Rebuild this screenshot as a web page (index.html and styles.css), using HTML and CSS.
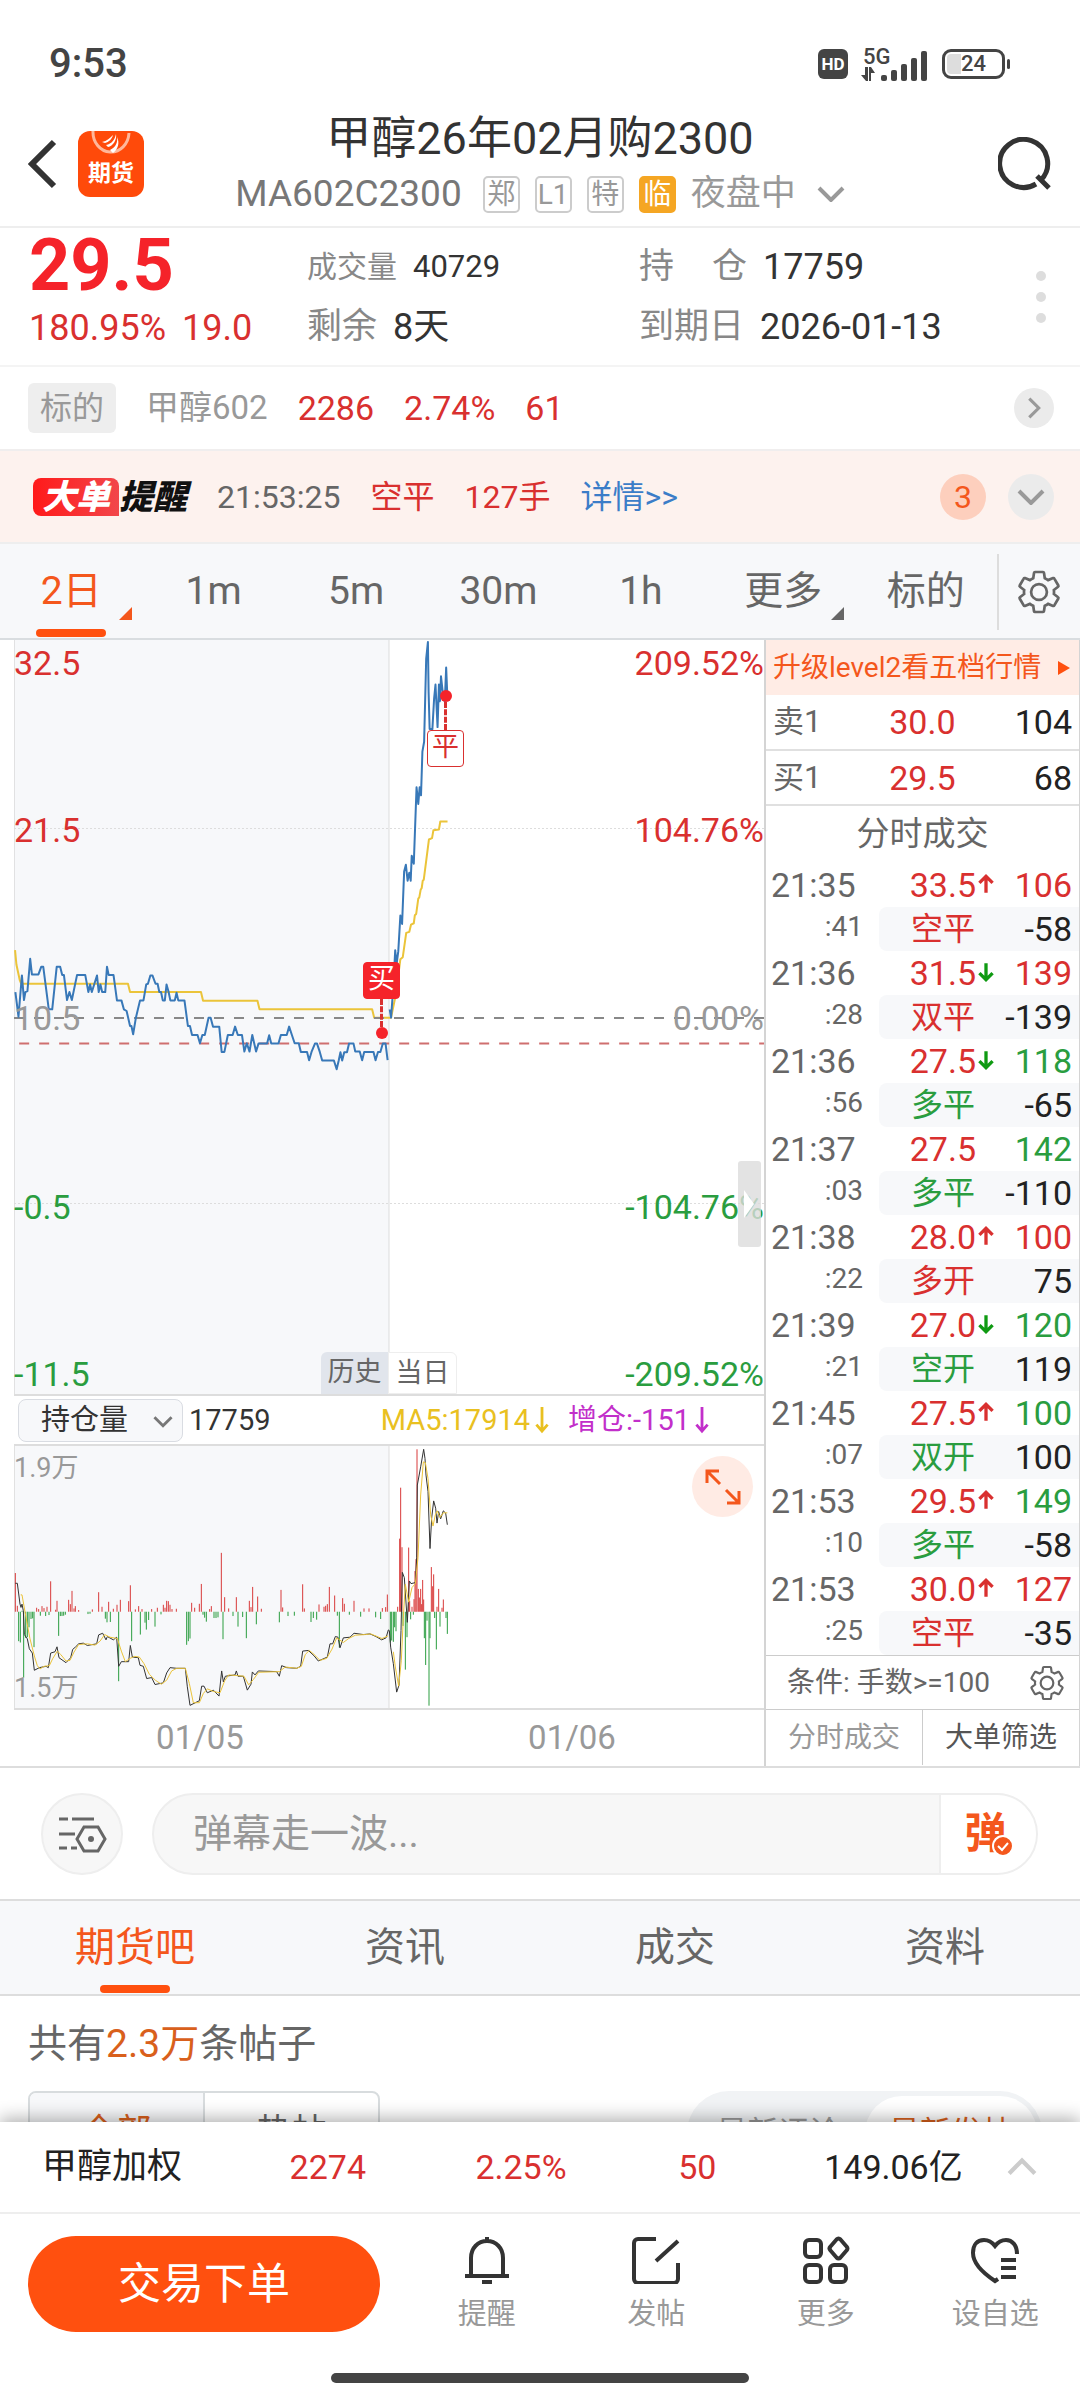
FILE: index.html
```html
<!DOCTYPE html>
<html lang="zh-CN">
<head>
    <meta charset="UTF-8">
    <meta name="viewport" content="width=device-width, initial-scale=1.0">
    <title>甲醇26年02月购2300</title>
    <link rel="stylesheet" href="styles.css">
</head>
<body>
    <!-- 公用图标 -->
    <svg class="sprite" aria-hidden="true">
        <symbol id="up" viewBox="0 0 16 20"><path d="M8 18V3M2 9l6-6 6 6" fill="none" stroke="currentColor" stroke-width="3"/></symbol>
        <symbol id="down" viewBox="0 0 16 20"><path d="M8 2v15M2 11l6 6 6-6" fill="none" stroke="currentColor" stroke-width="3"/></symbol>
        <symbol id="long-down" viewBox="0 0 16 30"><path d="M8 1v26M2 20l6 7 6-7" fill="none" stroke="currentColor" stroke-width="3"/></symbol>
        <symbol id="chevron" viewBox="0 0 28 16"><path d="M2 2l12 12L26 2" fill="none" stroke="currentColor" stroke-width="4"/></symbol>
        <symbol id="gear" viewBox="0 0 24 24"><g fill="none" stroke="currentColor"><path d="M19.14 12.94c.04-.3.06-.61.06-.94 0-.32-.02-.64-.07-.94l2.03-1.58c.18-.14.23-.41.12-.61l-1.92-3.32c-.12-.22-.37-.29-.59-.22l-2.39.96c-.5-.38-1.03-.7-1.62-.94L14.4 2.81c-.04-.24-.24-.41-.48-.41h-3.84c-.24 0-.43.17-.47.41L9.25 5.35c-.59.24-1.13.57-1.62.94l-2.39-.96c-.22-.08-.47 0-.59.22L2.74 8.87c-.12.21-.08.47.12.61l2.03 1.58c-.05.3-.09.63-.09.94s.02.64.07.94l-2.03 1.58c-.18.14-.23.41-.12.61l1.92 3.32c.12.22.37.29.59.22l2.39-.96c.5.38 1.03.7 1.62.94l.36 2.54c.05.24.24.41.48.41h3.84c.24 0 .44-.17.47-.41l.36-2.54c.59-.24 1.13-.56 1.62-.94l2.39.96c.22.08.47 0 .59-.22l1.92-3.32c.12-.22.07-.47-.12-.61z" stroke-width="1.3"/><circle cx="12" cy="12" r="3.8" stroke-width="1.3"/></g></symbol>
    </svg>

    <div class="app">
        <div class="status">
            <span class="clock">9:53</span>
            <div class="status-icons">
                <span class="hd">HD</span>
                <svg width="68" height="36" viewBox="0 0 68 36" fill="#444">
                    <text x="2" y="18" class="net">5G</text>
                    <path d="M4 21v8H0l5 6h2V21zM10 35v-8h4l-4-6H8v14z"/>
                    <rect x="20" y="29" width="6" height="6" rx="2"/>
                    <rect x="30" y="24" width="6" height="11" rx="2"/>
                    <rect x="40" y="18" width="6" height="17" rx="2"/>
                    <rect x="50" y="12" width="6" height="23" rx="2"/>
                    <rect x="60" y="5" width="6" height="30" rx="2"/>
                </svg>
                <span class="battery">24</span>
            </div>
        </div>

        <header class="header">
            <div class="header-left">
                <button class="icon-btn" aria-label="返回"><svg width="30" height="50" viewBox="0 0 30 50"><path d="M26 3L4 25l22 22" fill="none" stroke="#333" stroke-width="6"/></svg></button>
                <a href="#" class="logo">
                    <svg width="40" height="26" viewBox="0 0 40 26"><path d="M2 0a18 20 0 0 0 36 2" fill="none" stroke="#ffb79a" stroke-width="3"/><path d="M11 11c5-1 8-4 11-7-1 4-4 7-8 8zM15 14c6-1 9-6 10-11 1 6-3 12-8 13zM19 19c6-3 8-8 7-13 3 6 1 12-4 16z" fill="#fff"/></svg>
                    期货
                </a>
            </div>
            <div class="header-mid">
                <h1>甲醇26年02月购2300</h1>
                <div class="sub">
                    <span class="code">MA602C2300</span>
                    <span class="tag">郑</span>
                    <span class="tag">L1</span>
                    <span class="tag">特</span>
                    <span class="tag tag-on">临</span>
                    <span class="session">夜盘中</span>
                    <svg class="chev" width="28" height="16"><use href="#chevron"/></svg>
                </div>
            </div>
            <div class="header-right">
                <button class="icon-btn" aria-label="搜索"><svg width="54" height="54" viewBox="0 0 54 54"><path d="M38 47A24 24 0 1 1 43 43M39 39l12 12" fill="none" stroke="#333" stroke-width="5"/></svg></button>
            </div>
        </header>

        <main class="main">
            <section class="quote">
                <div class="quote-price">
                    <strong>29.5</strong>
                    <p><span>180.95%</span><span>19.0</span></p>
                </div>
                <dl class="quote-col">
                    <div class="small"><dt>成交量</dt><dd>40729</dd></div>
                    <div><dt>剩余</dt><dd>8天</dd></div>
                </dl>
                <dl class="quote-col">
                    <div><dt class="spread"><i>持</i><i>仓</i></dt><dd>17759</dd></div>
                    <div><dt>到期日</dt><dd>2026-01-13</dd></div>
                </dl>
                <button class="dots" aria-label="更多行情"><i></i><i></i><i></i></button>
            </section>

            <section class="under">
                <span class="under-tag">标的</span>
                <span class="under-name">甲醇602</span>
                <span class="red">2286</span>
                <span class="red">2.74%</span>
                <span class="red">61</span>
                <button class="round round-s" aria-label="查看标的"><svg class="turn" width="22" height="14"><use href="#chevron"/></svg></button>
            </section>

            <section class="alert">
                <span class="alert-logo"><b>大单</b><em>提醒</em></span>
                <span>21:53:25</span>
                <span class="red">空平</span>
                <span class="red">127手</span>
                <a href="#">详情&gt;&gt;</a>
                <span class="count">3</span>
                <button class="round" aria-label="展开"><svg width="28" height="16"><use href="#chevron"/></svg></button>
            </section>

            <nav class="periods">
                <button class="period active more">2日</button>
                <button class="period">1m</button>
                <button class="period">5m</button>
                <button class="period">30m</button>
                <button class="period">1h</button>
                <button class="period more">更多</button>
                <button class="period">标的</button>
                <button class="setting" aria-label="设置"><svg width="50" height="50"><use href="#gear"/></svg></button>
            </nav>

            <section class="market">
                <div class="charts">
                    <!-- 分时走势 -->
                    <div class="price-chart">
                        <svg class="plot" viewBox="41 24 2178 2268" preserveAspectRatio="none">
                            <rect x="41" y="24" width="1089" height="2268" fill="#f7f8fa"/>
                            <g class="grid">
                                <path d="M41 591H2219M41 1719H2219" stroke-dasharray="2 2"/>
                                <path d="M42 24V2292M1130 24V2292"/>
                            </g>
                            <path class="line avg" d="M44 957L48 1000 58 1048 62 1058H372L378 1083H584L590 1109H748L754 1135H1081L1087 1160H1136L1150 1090 1163 984 1170 978 1180 905 1189 902 1194 880 1202 876 1205 852 1209 848 1215 802 1218 798 1222 775 1225 770 1228 748 1231 745 1246 624 1255 620 1259 596 1275 594 1279 570H1300"/>
                            <path class="zero" d="M41 1161H2219"/>
                            <path class="last" d="M56 1238H2219"/>
                            <path class="line now" d="M45 1083L54 1157 64 1033 70 1107 74 1083 80 1080 88 983 93 1030H112L120 1007H126L142 1135H152L165 1007H175L181 1032H186L195 1107 202 1083 209 1107 224 1032H248L257 1083 262 1060 267 1083 282 1033 287 1083 292 1060 297 1083H306L311 1007 316 1032H330L340 1108H353L360 1135 368 1140 378 1185H382L387 1210 395 1160 407 1108H417L425 1060 430 1058 437 1033H443L452 1058H458L463 1083H468L473 1108H479L484 1060 490 1083 495 1108H508L513 1085 518 1108H536L546 1185H552L558 1212H574L581 1237 588 1212H595L606 1160H612L619 1187H637L644 1263H652L662 1212H676L683 1187 691 1212H703L710 1262 717 1237 725 1262 733 1212 744 1262 751 1238H776L782 1213 788 1238H809L816 1212H833L840 1187 848 1212 856 1237H868L874 1263H892L898 1288 905 1263 915 1238H921L929 1263 936 1289H970L978 1315 984 1289 989 1264 994 1289 1000 1264H1008L1014 1238H1027L1032 1262H1045L1052 1288 1058 1263H1085L1091 1288 1098 1263H1105L1112 1238H1120L1126 1288M1132 1135L1136 1160 1143 1060 1148 957 1152 1000 1157 960 1163 853 1168 878 1174 720 1179 700 1184 748 1189 724 1193 748 1196 673 1202 697 1210 467 1215 517 1219 467 1223 491 1227 360 1232 330 1238 80 1243 30 1245 180 1248 292H1256L1261 200 1265 158 1271 286 1275 158 1278 208 1281 133 1287 190 1292 210 1296 107 1300 208"/>
                        </svg>
                        <ul class="axis">
                            <li class="red">32.5</li>
                            <li class="red">21.5</li>
                            <li>10.5</li>
                            <li class="green">-0.5</li>
                            <li class="green">-11.5</li>
                        </ul>
                        <ul class="axis axis-right">
                            <li class="red">209.52%</li>
                            <li class="red">104.76%</li>
                            <li>0.00%</li>
                            <li class="green">-104.76%</li>
                            <li class="green">-209.52%</li>
                        </ul>
                        <div class="mark buy"><b>买</b></div>
                        <div class="mark flat"><b>平</b></div>
                        <div class="days"><span>历史</span><span>当日</span></div>
                        <div class="handle"></div>
                    </div>

                    <div class="indicator">
                        <label class="pick">
                            <select aria-label="副图指标"><option>持仓量</option></select>
                            <svg width="20" height="13"><use href="#chevron"/></svg>
                        </label>
                        <span>17759</span>
                        <span class="ma">MA5:17914<svg width="16" height="28"><use href="#long-down"/></svg></span>
                        <span class="inc">增仓:-151<svg width="16" height="28"><use href="#long-down"/></svg></span>
                    </div>

                    <!-- 持仓量副图 -->
                    <div class="hold-chart">
                        <svg class="plot" viewBox="42 42 2250 792" preserveAspectRatio="none">
                            <rect x="42" y="42" width="1125" height="792" fill="#f7f8fa"/>
                            <path class="grid" d="M43 42V834M1167 42V834"/>
                            <path class="bar rise" d="M46 543V426M52 543V525M110 543V531M116 543V535M126 543V526M132 543V532M141 543V528M152 543V451M167 543V537M171 543V510M206 543V507M211 543V520M216 543V480M222 543V533M226 543V526M236 543V538M277 543V536M296 543V484M306 543V528M326 543V513M340 543V534M351 543V522M361 543V507M386 543V511M391 543V463M406 543V536M416 543V526M426 543V535M455 543V535M472 543V531M490 543V522M495 543V531M500 543V510M505 543V511M510 543V522M516 543V535M529 543V534M575 543V516M584 543V531M598 543V519M604 543V459M629 543V535M634 543V526M664 543V365M674 543V499M686 543V533M709 543V499M748 543V510M753 543V529M758 543V468M773 543V497M784 543V534M843 543V477M848 543V530M908 543V460M913 543V533M957 543V521M972 543V528M977 543V525M982 543V520M988 543V468M1004 543V494M1028 543V502M1033 543V519M1062 543V510M1092 543V533M1107 543V533M1147 543V532M1157 543V529M1162 543V491M1193 543V528M1199 543V322M1202 543V168M1206 543V348M1226 543V349M1229 543V510M1236 543V528M1242 543V505M1245 543V420M1248 543V384M1251 543V52M1255 543V474M1258 543V500M1262 543V474M1265 543V520M1268 543V447M1271 543V506M1294 543V408M1298 543V466M1301 543V430M1311 543V528M1316 543V474M1326 543V531M1330 543V506"/>
                            <path class="bar fall" d="M56 543V632M61 543V636M66 543V540M71 543V742M77 543V622M82 543V620M87 543V590M93 543V565M98 543V563M102 543V650M121 543V555M137 543V556M147 543V553M176 543V616M181 543V556M186 543V556M191 543V555M196 543V552M264 543V550M270 543V549M316 543V564M321 543V575M331 543V574M356 543V753M395 543V632M421 543V612M435 543V576M439 543V597M446 543V568M465 543V588M483 543V551M560 543V643M565 543V632M570 543V624M609 543V552M614 543V561M619 543V573M642 543V562M648 543V562M654 543V560M669 543V626M699 543V556M714 543V588M728 543V559M739 543V623M769 543V581M838 543V575M864 543V556M883 543V555M933 543V574M940 543V562M950 543V567M1012 543V555M1018 543V651M1048 543V552M1082 543V558M1127 543V560M1142 543V565M1171 543V636M1175 543V630M1180 543V634M1184 543V590M1188 543V602M1209 543V586M1216 543V718M1221 543V620M1232 543V566M1240 543V552M1273 543V623M1277 543V704M1281 543V570M1287 543V827M1290 543V623M1304 543V562M1309 543V657M1320 543V588M1338 543V562M1342 543V610"/>
                            <path class="line hold" d="M46 457H52L60 520 63 530 66 520 70 540 73 612 82 625 88 655 97 668 103 720 118 712 138 708 145 712 152 668 165 664 171 649 177 682 198 697 212 682 218 657 226 650 236 640 250 638 262 645 290 640 296 613 308 608 318 628 322 618 340 628 350 620 356 708 364 694H386L391 645 397 680 415 682 420 705 430 708 440 745 455 742 465 763 490 758 500 728 510 712 530 714H556L562 770 570 826 582 820 598 812 605 768H612L622 788 640 780 657 798 665 722 670 755 676 738 705 734 709 722 714 738H730L742 780 753 762 757 725 765 734 775 722 830 724 838 738 845 706 860 712 890 714 902 708 908 662 925 660 942 676 955 692 982 680 990 640H998L1006 618 1014 620 1020 652 1030 622 1050 620 1062 608 1090 612 1110 610 1128 618 1145 628 1158 622 1165 598 1168 600 1172 650 1180 700 1190 786 1197 765 1203 600 1207 424 1213 440 1222 575 1228 450 1233 458 1246 455 1250 380 1252 160 1262 105 1271 52 1275 80 1278 130 1284 180 1290 352 1295 260 1301 208 1307 230 1311 275 1316 240 1322 262 1330 238 1337 245 1342 280"/>
                            <path class="line avg" d="M62 492H66L78 560 90 625 104 680 112 706 120 716 132 708 148 706 158 685 172 662 182 672 198 692 210 690 222 665 236 642 262 640 285 644 300 632 314 612 330 620 352 624 364 662 376 694 390 684 404 678 418 680 432 700 448 732 466 750 484 762 500 750 515 722 530 714H556L568 760 580 818 598 818 610 790 622 776 640 784 660 788 674 752 686 734 712 736 732 738 746 764 760 748 776 726 838 724 856 710 890 714 904 708 916 672 928 660 942 672 960 690 980 684 996 656 1010 622 1030 636 1046 624 1066 614 1096 612 1112 610 1146 624 1164 616M1180 664L1186 710 1196 768 1204 690 1210 560 1216 460 1226 514 1236 470 1246 458 1254 380 1262 190 1270 90 1276 92 1284 140 1292 250 1299 284 1306 250 1312 238 1320 258 1330 244 1342 244"/>
                        </svg>
                        <span class="hold-max">1.9万</span>
                        <span class="hold-min">1.5万</span>
                        <button class="expand" aria-label="放大"><svg width="36" height="36" viewBox="0 0 36 36" fill="none" stroke="#f4571c" stroke-width="3"><path d="M15 15L2 2M2 14V2h12M21 21l13 13M34 22v12H22"/></svg></button>
                    </div>
                    <div class="dates"><span>01/05</span><span>01/06</span></div>
                </div>

                <aside class="panel">
                    <a href="#" class="upgrade">升级level2看五档行情<i></i></a>
                    <table class="book">
                        <tr><th>卖1</th><td class="red">30.0</td><td>104</td></tr>
                        <tr><th>买1</th><td class="red">29.5</td><td>68</td></tr>
                    </table>
                    <h2>分时成交</h2>
                    <table class="trades">
                        <tr><td>21:35</td><td class="red">33.5<svg><use href="#up"/></svg></td><td class="red">106</td></tr>
                        <tr class="detail"><td>:41</td><td class="red">空平</td><td>-58</td></tr>
                        <tr><td>21:36</td><td class="red">31.5<svg class="dn"><use href="#down"/></svg></td><td class="red">139</td></tr>
                        <tr class="detail"><td>:28</td><td class="red">双平</td><td>-139</td></tr>
                        <tr><td>21:36</td><td class="red">27.5<svg class="dn"><use href="#down"/></svg></td><td class="green">118</td></tr>
                        <tr class="detail"><td>:56</td><td class="green">多平</td><td>-65</td></tr>
                        <tr><td>21:37</td><td class="red">27.5<svg></svg></td><td class="green">142</td></tr>
                        <tr class="detail"><td>:03</td><td class="green">多平</td><td>-110</td></tr>
                        <tr><td>21:38</td><td class="red">28.0<svg><use href="#up"/></svg></td><td class="red">100</td></tr>
                        <tr class="detail"><td>:22</td><td class="red">多开</td><td>75</td></tr>
                        <tr><td>21:39</td><td class="red">27.0<svg class="dn"><use href="#down"/></svg></td><td class="green">120</td></tr>
                        <tr class="detail"><td>:21</td><td class="green">空开</td><td>119</td></tr>
                        <tr><td>21:45</td><td class="red">27.5<svg><use href="#up"/></svg></td><td class="green">100</td></tr>
                        <tr class="detail"><td>:07</td><td class="green">双开</td><td>100</td></tr>
                        <tr><td>21:53</td><td class="red">29.5<svg><use href="#up"/></svg></td><td class="green">149</td></tr>
                        <tr class="detail"><td>:10</td><td class="green">多平</td><td>-58</td></tr>
                        <tr><td>21:53</td><td class="red">30.0<svg><use href="#up"/></svg></td><td class="red">127</td></tr>
                        <tr class="detail"><td>:25</td><td class="red">空平</td><td>-35</td></tr>
                    </table>
                    <button class="filter">条件: 手数&gt;=100<svg width="40" height="40"><use href="#gear"/></svg></button>
                    <div class="panel-tabs">
                        <button>分时成交</button>
                        <button class="active">大单筛选</button>
                    </div>
                </aside>
            </section>

            <form class="danmu">
                <button type="button" class="danmu-set" aria-label="弹幕设置">
                    <svg width="50" height="40" viewBox="0 0 50 40" fill="none" stroke="#666" stroke-width="3"><path d="M2 5h9M15 5h22M2 20h16M2 34h8M14 34h6M27 13h14l7 12-7 12H27l-7-12z"/><circle cx="34" cy="25" r="3" fill="#666" stroke="none"/></svg>
                </button>
                <div class="danmu-box">
                    <input type="text" placeholder="弹幕走一波..." aria-label="弹幕">
                    <button type="button" class="danmu-on">弹<svg width="22" height="22" viewBox="0 0 22 22"><circle cx="11" cy="11" r="10" fill="#f4571c" stroke="#fff" stroke-width="2"/><path d="M6 11l4 4 6-7" fill="none" stroke="#fff" stroke-width="2"/></svg></button>
                </div>
            </form>

            <nav class="tabs">
                <button class="active">期货吧</button>
                <button>资讯</button>
                <button>成交</button>
                <button>资料</button>
            </nav>

            <section class="posts">
                <p>共有<span>2.3万</span>条帖子</p>
                <div class="posts-bar">
                    <div class="seg">
                        <button class="active">全部</button>
                        <button>热帖</button>
                    </div>
                    <div class="sort">
                        <button>最新评论</button>
                        <button class="active">最新发帖</button>
                    </div>
                </div>
            </section>
        </main>

        <footer class="footer">
            <div class="ticker">
                <span>甲醇加权</span>
                <span class="red">2274</span>
                <span class="red">2.25%</span>
                <span class="red">50</span>
                <span>149.06亿</span>
                <button class="icon-btn" aria-label="展开"><svg class="flip" width="30" height="20"><use href="#chevron"/></svg></button>
            </div>
            <div class="actions">
                <button class="trade">交易下单</button>
                <nav class="foot-nav">
                    <a href="#"><svg viewBox="0 0 48 48"><path d="M24 1v5M8 39V22C8 12 15 5 24 5s16 7 16 17v17M2 40h44M19 46h10"/></svg>提醒</a>
                    <a href="#"><svg viewBox="0 0 48 48"><path d="M24 3H6a4 4 0 0 0-4 4v36a4 4 0 0 0 4 4h36a4 4 0 0 0 4-4V27M24 25L46 5"/></svg>发帖</a>
                    <a href="#"><svg viewBox="0 0 48 48"><rect x="3" y="4" width="16" height="17" rx="4"/><rect x="3" y="29" width="16" height="17" rx="4"/><rect x="28" y="29" width="16" height="17" rx="4"/><path d="M34.500 3.500q2-2 4 0l6 7q2 2 0 4l-6 7q-2 2-4 0l-6-7q-2-2 0-4z"/></svg>更多</a>
                    <a href="#"><svg viewBox="0 0 48 48"><path d="M46 18C46 9 41 4 35 4c-5 0-8 2-11 6C21 6 18 4 13 4 6 4 2 9 2 17c0 11 10 20 22 28l3-2M30 24h15M30 32h15M30 41h15"/></svg>设自选</a>
                </nav>
            </div>
            <div class="home-bar"></div>
        </footer>
    </div>
</body>
</html>
```
FILE: styles.css
```css
* {
    margin: 0;
    padding: 0;
    box-sizing: border-box;
}
body {
    font-family: Roboto, "Noto Sans CJK SC", sans-serif;
    font-size: 34px;
    line-height: 40px;
    color: #666;
    background-color: #fff;
}
button, input, select {
    font: inherit;
    color: inherit;
    background: none;
    border: none;
}
a {
    color: inherit;
    text-decoration: none;
}
ul {
    list-style: none;
}
i, em {
    font-style: normal;
}
svg {
    display: block;
    flex: none;
}
.sprite {
    position: absolute;
    width: 0;
    height: 0;
}
.red {
    color: #d9302f;
}
.green {
    color: #2a9d3f;
}
.icon-btn {
    display: flex;
}
.flip {
    transform: rotate(180deg);
}
.turn {
    transform: rotate(-90deg);
}

/* 整页：顶部 + 滚动内容 + 底部 */
.app {
    height: 100vh;
    display: flex;
    flex-direction: column;
}
.main {
    flex: 1;
    min-height: 0;
    overflow-y: auto;
    scrollbar-width: none;
}

/* 状态栏 */
.status {
    flex: none;
    display: flex;
    justify-content: space-between;
    align-items: center;
    height: 106px;
    padding: 22px 75px 0 49px;
    color: #444;
}
.clock {
    font-size: 40px;
    font-weight: 500;
}
.status-icons {
    display: flex;
    align-items: center;
    gap: 13px;
}
.hd {
    width: 30px;
    height: 30px;
    line-height: 30px;
    border-radius: 6px;
    background-color: #444;
    color: #fff;
    font-size: 17px;
    font-weight: 700;
    text-align: center;
}
.net {
    font-size: 22px;
    font-weight: 500;
}
.status-icons svg {
    overflow: visible;
}
.battery {
    position: relative;
    width: 63px;
    height: 30px;
    padding: 2px;
    line-height: 20px;
    border: 3px solid #444;
    border-radius: 9px;
    background: linear-gradient(90deg, #ddd 14px, #fff 14px) content-box;
    font-size: 22px;
    font-weight: 500;
    text-align: center;
}
.battery::after {
    content: "";
    position: absolute;
    right: -8px;
    top: 7px;
    width: 3px;
    height: 10px;
    border-radius: 2px;
    background-color: #444;
}

/* 标题栏 */
.header {
    flex: none;
    display: grid;
    grid-template-columns: 160px 1fr 160px;
    align-items: center;
    height: 122px;
    padding-bottom: 4px;
    border-bottom: 2px solid #eee;
}
.header-left {
    display: flex;
    align-items: center;
    gap: 20px;
    padding-left: 28px;
}
.logo {
    display: flex;
    flex-direction: column;
    align-items: center;
    width: 66px;
    height: 66px;
    border-radius: 12px;
    background-color: #ff4a0a;
    color: #fff;
    font-size: 23px;
    font-weight: 700;
    line-height: 34px;
}
.header-mid {
    text-align: center;
}
.header-mid h1 {
    font-size: 45px;
    font-weight: 400;
    line-height: 60px;
    color: #333;
}
.sub {
    display: flex;
    justify-content: center;
    align-items: center;
    gap: 15px;
    height: 50px;
    color: #888;
}
.code {
    font-size: 37px;
    color: #777;
    margin-right: 6px;
}
.tag {
    width: 37px;
    height: 37px;
    line-height: 33px;
    border: 2px solid #ccc;
    border-radius: 5px;
    font-size: 28px;
    color: #999;
}
.tag-on {
    border-color: #f5a623;
    background-color: #f5a623;
    color: #fff;
}
.session {
    font-size: 35px;
    color: #999;
}
.sub .chev {
    margin-left: 6px;
    color: #999;
}
.header-right {
    display: flex;
    justify-content: flex-end;
    padding-right: 28px;
}

/* 行情 */
.quote {
    display: grid;
    grid-template-columns: 278px 332px 1fr 20px;
    height: 139px;
    padding: 0 29px;
    border-bottom: 2px solid #f4f4f4;
}
.quote-price {
    color: #d9302f;
    font-size: 36px;
}
.quote-price strong {
    display: block;
    height: 80px;
    line-height: 76px;
    font-size: 72px;
    color: #f5232a;
}
.quote-price p {
    display: flex;
    gap: 16px;
}
.quote-col {
    display: flex;
    flex-direction: column;
    gap: 20px;
    padding-top: 19px;
    font-size: 35px;
}
.quote-col div {
    display: flex;
    gap: 16px;
}
.quote-col .small {
    font-size: 30px;
}
.quote-col dt {
    color: #888;
}
.quote-col dd {
    color: #333;
    font-size: 36px;
}
.quote-col .small dd {
    font-size: 31px;
}
.spread {
    display: flex;
    justify-content: space-between;
    width: 108px;
}
.dots {
    display: flex;
    flex-direction: column;
    justify-content: center;
    align-items: center;
    gap: 11px;
}
.dots i {
    width: 10px;
    height: 10px;
    border-radius: 50%;
    background-color: #ddd;
}

.under {
    display: flex;
    align-items: center;
    gap: 30px;
    height: 84px;
    padding: 0 26px 0 28px;
    border-bottom: 2px solid #f0eeee;
}
.under-tag {
    height: 50px;
    padding: 0 12px;
    line-height: 50px;
    border-radius: 6px;
    background-color: #eee;
    color: #999;
    font-size: 32px;
}
.under-name {
    font-size: 33px;
    color: #999;
}
.round {
    display: flex;
    justify-content: center;
    align-items: center;
    width: 46px;
    height: 46px;
    border-radius: 50%;
    background-color: #ebebeb;
    color: #999;
}
.round-s {
    width: 40px;
    height: 40px;
    margin-left: auto;
}

.alert {
    display: flex;
    align-items: center;
    gap: 30px;
    height: 93px;
    padding: 0 26px 0 33px;
    border-bottom: 2px solid #eee;
    background-color: #fdf2ee;
    font-size: 32px;
}
.alert-logo {
    display: flex;
    align-items: center;
    font-size: 34px;
    font-weight: 900;
    line-height: 38px;
}
.alert-logo b {
    width: 86px;
    border-radius: 8px 8px 0 8px;
    background: linear-gradient(90deg, #ff1a1a, #f2464a);
    color: #fff;
    font-weight: 900;
    font-style: italic;
    text-align: center;
}
.alert-logo em {
    color: #111;
    font-style: italic;
}
.alert a {
    color: #3b7dc8;
}
.count {
    width: 46px;
    height: 46px;
    line-height: 46px;
    margin-left: auto;
    border-radius: 50%;
    background-color: #fdcfbd;
    color: #f4571c;
    text-align: center;
}
.alert .round {
    margin-left: -8px;
}

/* 周期 */
.periods {
    display: flex;
    height: 96px;
    border-bottom: 2px solid #d9dde0;
    background-color: #f7f8fa;
    font-size: 39px;
}
.period {
    position: relative;
    flex: 1;
}
.periods .active, .tabs .active {
    color: #f4571c;
}
.periods .active::before, .tabs .active::before {
    content: "";
    position: absolute;
    left: 50%;
    bottom: 1px;
    width: 70px;
    height: 8px;
    margin-left: -35px;
    border-radius: 4px;
    background-color: #ff500f;
}
.more::after {
    content: "";
    position: absolute;
    left: 50%;
    bottom: 18px;
    margin-left: 48px;
    border-bottom: 13px solid currentColor;
    border-left: 13px solid transparent;
}
.setting {
    display: flex;
    justify-content: center;
    align-items: center;
    width: 83px;
    height: 76px;
    margin-top: 10px;
    border-left: 2px solid #ddd;
}

/* 图表区 */
.market {
    display: flex;
    border-bottom: 2px solid #ddd;
}
.charts {
    flex: 1;
    padding-left: 14px;
}
.plot {
    width: 100%;
    height: 100%;
}
.plot path {
    fill: none;
    vector-effect: non-scaling-stroke;
}
.grid, .grid path {
    stroke: #ddd;
    stroke-width: 1;
}
.line {
    stroke-width: 2;
    stroke-linejoin: round;
}
.avg {
    stroke: #ebc43a;
}
.now {
    stroke: #3878b8;
}
.hold {
    stroke: #333;
}
.hold-chart .line {
    stroke-width: 1;
}
.zero {
    stroke: #888;
    stroke-width: 2;
    stroke-dasharray: 10 10;
}
.last {
    stroke: #cf6f6f;
    stroke-width: 2;
    stroke-dasharray: 10 10;
}
.bar {
    stroke-width: 1;
}
.rise {
    stroke: #d83a3a;
}
.fall {
    stroke: #2a9d3f;
}
.price-chart {
    position: relative;
    height: 756px;
    border-bottom: 2px solid #ddd;
}
.axis li {
    position: absolute;
    left: 0;
    top: 50%;
    margin-top: -19px;
    color: #999;
}
.axis-right li {
    left: auto;
    right: 0;
}
.axis .red {
    color: #d9302f;
}
.axis .green {
    color: #2a9d3f;
}
.axis li:nth-child(1) {
    top: 22px;
}
.axis li:nth-child(2) {
    top: 25%;
}
.axis li:nth-child(4) {
    top: 75%;
}
.axis li:nth-child(5) {
    top: 733px;
}
.mark {
    position: absolute;
    display: flex;
    flex-direction: column;
    align-items: center;
    width: 37px;
}
.mark b {
    order: 1;
    width: 37px;
    height: 37px;
    line-height: 33px;
    border: 1px solid #d9302f;
    border-radius: 4px;
    background-color: #fff;
    color: #d9302f;
    font-size: 27px;
    font-weight: 400;
    text-align: center;
}
.mark::before {
    content: "";
    order: 2;
    height: 28px;
    border-left: 3px dashed #d9302f;
}
.mark::after {
    content: "";
    order: 3;
    width: 12px;
    height: 12px;
    border-radius: 50%;
    background-color: #f5232a;
}
.buy {
    left: calc(50% - 26px);
    top: 322px;
}
.buy b {
    border-color: #f5232a;
    background-color: #f5232a;
    color: #fff;
}
.flat {
    flex-direction: column-reverse;
    left: calc(50% + 38px);
    top: 50px;
}
.days {
    position: absolute;
    left: 50%;
    bottom: 0;
    display: flex;
    width: 136px;
    margin-left: -68px;
    font-size: 27px;
    text-align: center;
}
.days span {
    flex: 1;
    border-radius: 6px 0 0 0;
    background-color: #e1e5ec;
}
.days span + span {
    border: 1px solid #eee;
    border-radius: 0 6px 0 0;
    background-color: #fff;
}
.handle {
    position: absolute;
    right: 3px;
    top: 521px;
    display: flex;
    align-items: center;
    width: 23px;
    height: 86px;
    padding-left: 6px;
    border-radius: 3px;
    background-color: rgba(220, 220, 220, 0.8);
}
.handle::before {
    content: "";
    border-left: 10px solid #fff;
    border-top: 14px solid transparent;
    border-bottom: 14px solid transparent;
}
.indicator {
    display: flex;
    align-items: center;
    height: 50px;
    padding-left: 4px;
    border-bottom: 2px solid #ddd;
    color: #333;
    font-size: 29px;
}
.pick {
    position: relative;
    margin-right: 6px;
}
.pick select {
    appearance: none;
    display: block;
    width: 165px;
    height: 43px;
    padding-left: 22px;
    border: 1px solid #d9dce2;
    border-radius: 8px;
    background-color: #f7f8fa;
}
.pick svg {
    position: absolute;
    right: 10px;
    top: 16px;
    color: #777;
}
.indicator span {
    display: flex;
    align-items: center;
    gap: 4px;
}
.indicator .ma {
    margin-left: auto;
    margin-right: 18px;
    color: #e9c020;
}
.indicator .inc {
    margin-right: 54px;
    color: #c22fca;
}
.hold-chart {
    position: relative;
    height: 264px;
    border-bottom: 2px solid #ddd;
}
.hold-max, .hold-min {
    position: absolute;
    left: 0;
    top: 2px;
    color: #999;
    font-size: 27px;
}
.hold-min {
    top: auto;
    bottom: 0;
}
.expand {
    position: absolute;
    right: 11px;
    top: 10px;
    display: flex;
    justify-content: center;
    align-items: center;
    width: 61px;
    height: 61px;
    border-radius: 50%;
    background-color: #ffebe4;
}
.dates {
    display: flex;
    padding-right: 6px;
    line-height: 56px;
    color: #999;
    font-size: 33px;
    text-align: center;
}
.dates span {
    flex: 1;
}

/* 盘口 */
.panel {
    width: 316px;
    border-left: 2px solid #d4d4d4;
    border-right: 1px solid #d4d4d4;
}
.upgrade {
    display: flex;
    align-items: center;
    justify-content: space-between;
    height: 55px;
    padding: 0 9px 0 7px;
    background-color: #ffece5;
    color: #f4571c;
    font-size: 28px;
}
.upgrade i {
    border-left: 12px solid #ff500f;
    border-top: 7px solid transparent;
    border-bottom: 7px solid transparent;
}
.panel table {
    width: 100%;
    table-layout: fixed;
    border-collapse: collapse;
    text-align: right;
}
.book tr {
    height: 55px;
    border-bottom: 2px solid #e0e0e0;
}
.book th {
    width: 100px;
    padding-left: 7px;
    color: #666;
    font-size: 31px;
    font-weight: 400;
    text-align: left;
}
.book td {
    padding-right: 17px;
}
.book td + td, .trades td:last-child {
    padding-right: 7px;
}
.book td:last-child, .detail td:last-child {
    color: #222;
}
.panel h2 {
    height: 57px;
    line-height: 56px;
    font-size: 33px;
    font-weight: 400;
    text-align: center;
}
.trades tr {
    height: 44px;
}
.trades td:nth-child(1) {
    width: 113px;
    padding-left: 5px;
    text-align: left;
}
.trades td:nth-child(2) {
    width: 117px;
}
.trades svg {
    display: inline-block;
    width: 18px;
    height: 22px;
    margin: 0 1px 8px 1px;
    vertical-align: middle;
}
.trades .dn {
    color: #0f9a12;
}
.trades .detail td:nth-child(1) {
    padding-right: 16px;
    padding-bottom: 4px;
    font-size: 28px;
    text-align: right;
}
.detail td:nth-child(2) {
    padding-right: 21px;
    border-radius: 8px 0 0 8px;
    font-size: 32px;
}
.detail td + td {
    background-color: #f7f8fa;
}
.filter {
    display: flex;
    justify-content: space-between;
    align-items: center;
    width: 100%;
    height: 54px;
    padding: 0 12px 0 21px;
    border-top: 1px solid #ccc;
    font-size: 28px;
}
.panel-tabs {
    display: flex;
    height: 56px;
    border-top: 1px solid #ccc;
    font-size: 28px;
}
.panel-tabs button {
    flex: 1;
    color: #999;
}
.panel-tabs .active {
    border-left: 1px solid #ccc;
    color: #555;
}

/* 弹幕 */
.danmu {
    display: flex;
    align-items: center;
    gap: 29px;
    height: 131px;
    padding: 0 42px 0 41px;
}
.danmu-set {
    display: flex;
    justify-content: center;
    align-items: center;
    width: 82px;
    height: 82px;
    border: 2px solid #eee;
    border-radius: 50%;
    background-color: #f7f7f7;
}
.danmu-box {
    flex: 1;
    display: flex;
    height: 82px;
    border: 2px solid #eee;
    border-radius: 41px;
    background-color: #f7f7f7;
    overflow: hidden;
}
.danmu-box input {
    flex: 1;
    padding-left: 39px;
    font-size: 39px;
}
.danmu-box input::placeholder {
    color: #999;
}
.danmu-on {
    position: relative;
    width: 97px;
    padding-right: 6px;
    border-left: 2px solid #eee;
    background-color: #fff;
    color: #f4571c;
    font-size: 42px;
    font-weight: 700;
}
.danmu-on svg {
    position: absolute;
    right: 22px;
    bottom: 16px;
}

/* 底部标签 */
.tabs {
    display: flex;
    height: 97px;
    border-top: 2px solid #ddd;
    border-bottom: 2px solid #ddd;
    background-color: #f7f8fa;
    font-size: 40px;
}
.tabs button {
    position: relative;
    flex: 1;
}
.posts {
    padding: 28px;
    font-size: 39px;
}
.posts p {
    margin-bottom: 27px;
}
.posts p span {
    color: #d9601c;
}
.posts-bar {
    display: flex;
    justify-content: space-between;
    padding-right: 10px;
    font-size: 35px;
}
.seg {
    display: flex;
    width: 352px;
    height: 84px;
    border: 2px solid #d8dcde;
    border-radius: 8px;
    overflow: hidden;
}
.seg button {
    flex: 1;
}
.seg .active {
    border-right: 2px solid #d8dcde;
    background-color: #f7f8fa;
}
.posts-bar .active {
    color: #d9601c;
}
.sort {
    display: flex;
    width: 355px;
    height: 84px;
    padding: 5px;
    border-radius: 42px;
    background-color: #f1f3f5;
    font-size: 31px;
}
.sort button {
    flex: 1;
    border-radius: 37px;
    color: #999;
}
.sort .active {
    background-color: #fff;
}

/* 底栏 */
.footer {
    flex: none;
    position: relative;
    background-color: #fff;
    box-shadow: 0 -4px 16px rgba(0, 0, 0, 0.3);
}
.ticker {
    display: grid;
    grid-template-columns: 180fr 214fr 174fr 180fr 214fr 44px;
    align-items: center;
    height: 92px;
    padding: 0 36px 0 42px;
    border-bottom: 2px solid #eee;
    color: #222;
    text-align: center;
}
.ticker span:first-child {
    font-size: 35px;
    text-align: left;
}
.ticker .icon-btn {
    justify-content: center;
    color: #ccc;
}
.actions {
    display: flex;
    gap: 22px;
    padding: 22px 0 0 28px;
}
.trade {
    width: 352px;
    height: 96px;
    border-radius: 48px;
    background-color: #ff500f;
    color: #fff;
    font-size: 43px;
}
.foot-nav {
    flex: 1;
    display: flex;
}
.foot-nav a {
    flex: 1;
    display: flex;
    flex-direction: column;
    align-items: center;
    gap: 10px;
    color: #999;
    font-size: 29px;
}
.foot-nav svg {
    width: 48px;
    height: 48px;
    fill: none;
    stroke: #333;
    stroke-width: 4;
}
.home-bar {
    width: 418px;
    height: 10px;
    margin: 39px auto 17px;
    border-radius: 5px;
    background-color: #444;
}
```
